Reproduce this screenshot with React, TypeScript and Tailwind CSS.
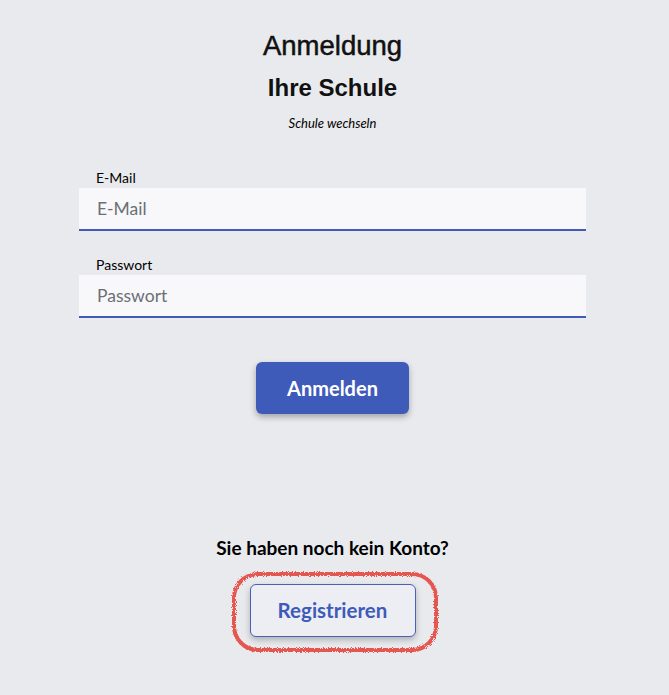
import React from 'react';

const lato = { fontFamily: 'Lato, "Open Sans", sans-serif' };

function Field({ label, placeholder, type }: { label: string; placeholder: string; type: string }) {
  return (
    <div className="flex flex-col">
      <label className="text-[14px] leading-[17px] text-black pl-[17px]">{label}</label>
      <input
        type={type}
        placeholder={placeholder}
        className="mt-[2px] h-[43px] bg-[#f8f8fa] border-b-2 border-[#3f5bb9] px-[18px] text-[17.5px] text-black placeholder:text-[#6b6f76] outline-none"
      />
    </div>
  );
}

// hand-drawn red highlight around the register button
function Scribble() {
  return (
    <svg className="absolute -left-[19px] -top-[13px] pointer-events-none" width="208" height="82" viewBox="0 0 208 82">
      <defs>
        <filter id="rough" x="-10%" y="-10%" width="120%" height="120%">
          <feTurbulence type="fractalNoise" baseFrequency="1.1" numOctaves="2" seed="3" />
          <feDisplacementMap in="SourceGraphic" scale="4" />
          <feGaussianBlur stdDeviation="0.35" />
        </filter>
      </defs>
      <rect x="3" y="3" width="202" height="76" rx="24" fill="none" stroke="#e4453e" strokeOpacity="0.9" strokeWidth="4" filter="url(#rough)" />
    </svg>
  );
}

export default function App() {
  return (
    <div className="min-h-[695px] w-full bg-[#e9eaed]" style={lato}>
      <div className="ml-[79px] w-[507px] flex flex-col items-center pt-[30px]">
        <h1 className="font-['Liberation_Sans',Arial,sans-serif] text-[27.5px] leading-[32px] text-[#111] [-webkit-text-stroke:0.5px_#111]">Anmeldung</h1>
        <h2 className="mt-[12px] font-['Liberation_Sans',Arial,sans-serif] font-bold text-[24px] leading-[28px] text-[#111]">Ihre Schule</h2>
        <a className="mt-[14px] text-[13px] leading-[15px] italic text-black cursor-pointer">Schule wechseln</a>

        <div className="w-full mt-[38px] flex flex-col gap-[25px]">
          <Field label="E-Mail" placeholder="E-Mail" type="email" />
          <Field label="Passwort" placeholder="Passwort" type="password" />
        </div>

        <button className="mt-[44px] w-[153px] h-[52px] rounded-[6px] bg-[#3f5bb9] text-white font-bold text-[20px] shadow-[0_3px_6px_rgba(0,0,0,0.3)]">
          Anmelden
        </button>

        <p className="mt-[122px] font-bold text-[19px] leading-[23px] text-black">Sie haben noch kein Konto?</p>

        <div className="relative mt-[25px]">
          <Scribble />
          <button className="relative w-[166px] h-[53px] rounded-[6px] border border-[#4a5fb6] bg-[#edeef3] text-[#3f5bb9] font-bold text-[20.5px] shadow-[0_3px_6px_rgba(0,0,0,0.25)]">
            Registrieren
          </button>
        </div>
      </div>
    </div>
  );
}
